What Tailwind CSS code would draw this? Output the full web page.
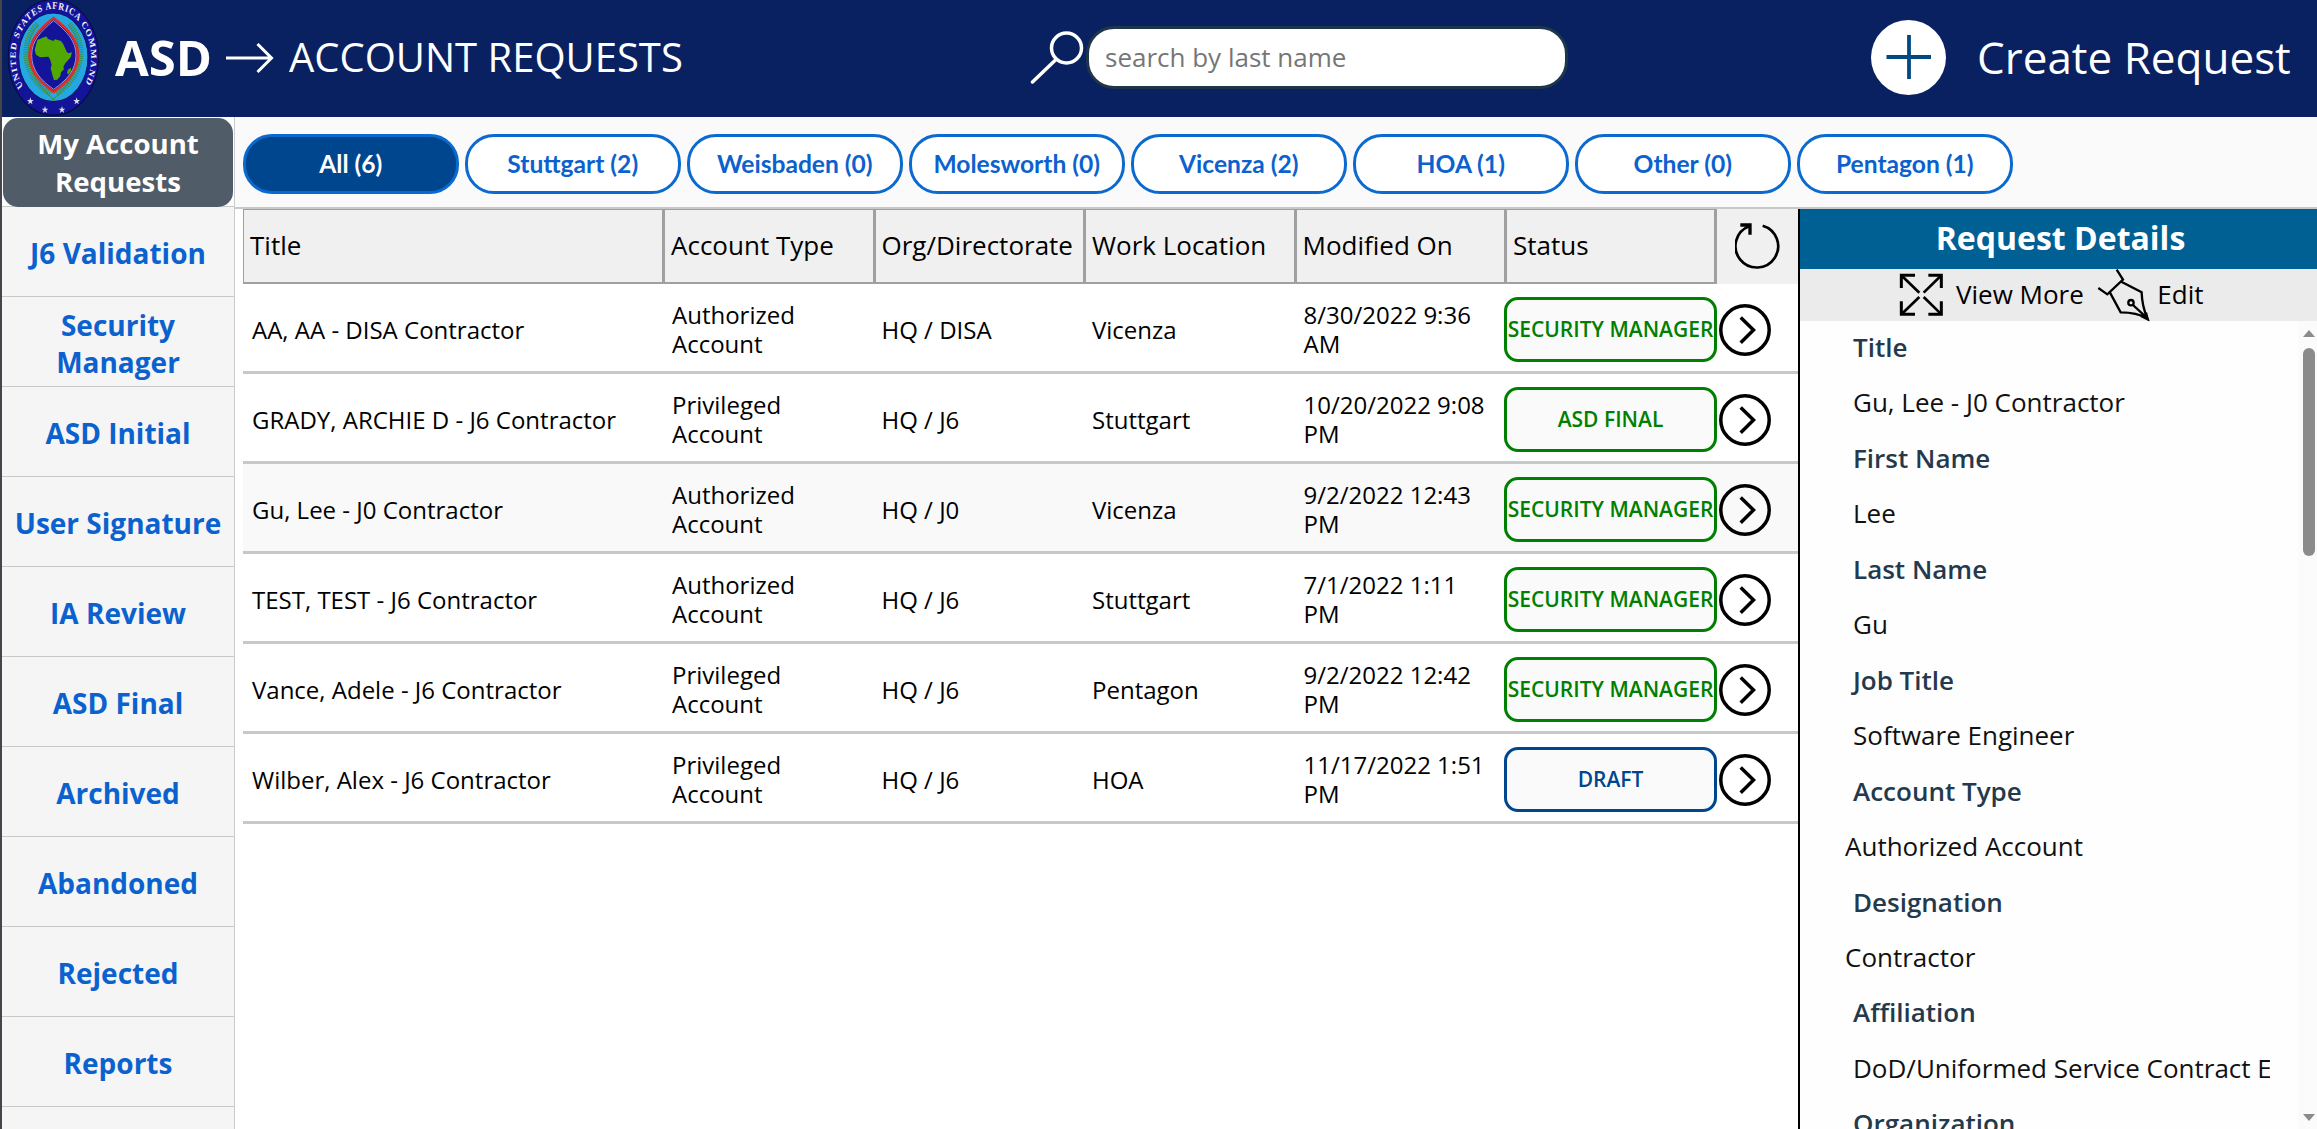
<!DOCTYPE html>
<html lang="en">
<head>
<meta charset="utf-8">
<title>ASD - Account Requests</title>
<script src="https://cdn.jsdelivr.net/npm/@tailwindcss/browser@4"></script>
</head>
<body class="flex h-[1129px] w-[2317px] flex-col overflow-hidden border-l-2 border-[#45454b] bg-white font-['Open_Sans',sans-serif] text-black">

<header class="flex h-[117px] shrink-0 items-center bg-[#092061] text-white">
  <svg class="h-[118px] w-[100px] shrink-0" viewBox="6 0 300 354">
    <g transform="translate(160 172) scale(2.73 3.5)">
      <circle r="49.6" fill="#14149a" stroke="#0a0a3c" stroke-width="1"/>
      <circle r="38" fill="#25a8e2" stroke="#0c1468" stroke-width="1"/>
      <path id="ring" d="M-33.2 24.9 A41.5 41.5 0 1 1 33.2 24.9" fill="none"/>
      <text font-family="'Liberation Serif'" font-weight="700" font-size="8.8" fill="#f4f4f8" textLength="180"><textPath href="#ring" textLength="180">UNITED STATES AFRICA COMMAND</textPath></text>
    </g>
    <g fill="none" stroke="#3f8f3c">
      <path d="M112 72C60 125 62 225 150 282M208 72C260 125 258 225 170 282" stroke-width="15" stroke-dasharray="3 3.500"/>
      <path d="M116 75C66 125 70 222 165 302M204 75C254 125 250 222 155 302" stroke-width="3"/>
    </g>
    <path d="M161 54C116 88 89 120 89 166C89 212 116 245 161 276C206 245 234 212 234 166C234 120 206 88 161 54Z" fill="#14149a" stroke="#dc2f2b" stroke-width="8"/>
    <path d="M161 62C120 95 95 124 95 166C95 208 120 240 161 268C202 240 228 208 228 166C228 124 202 95 161 62Z" fill="none" stroke="#e8d8e8" stroke-width="2"/>
    <path d="M104 150L112 120L135 110L141 110L143 116L160 123L165 118L183 123L190 133L200 155L205 160L216 157L212 172L196 190L190 200L192 208L183 217L181 228L172 239L162 240L158 228L152 205L155 195L150 178L145 170L120 172L108 164ZM213 203L213 212L206 223L201 220L203 210Z" fill="#50a800"/>
    <g fill="#dcdce8">
      <path id="star" d="M91 292l2.500 8h7.500l-6 5 2.500 8-6.500-5-6.500 5 2.500-8-6-5h7.500z"/>
      <use href="#star" x="44" y="26"/><use href="#star" x="95" y="26"/><use href="#star" x="139"/>
    </g>
  </svg>
  <div class="ml-[13px] w-[98px] pb-[4px] text-[49px] leading-[60px] font-bold">ASD</div>
  <svg class="ml-[12px] h-8 w-[50px] shrink-0" viewBox="0 0 50 32" fill="none" stroke="#fff" stroke-width="3"><path d="M1 15H46M32.500 1L46.500 15L32.500 29"/></svg>
  <div class="ml-[14px] w-[741px] pb-[4px] text-[40px] leading-[50px]">ACCOUNT REQUESTS</div>
  <svg class="mt-[-3px] h-[54px] w-[54px] shrink-0" viewBox="0 0 54 54" fill="none" stroke="#fff" stroke-width="3.500" stroke-linecap="round"><circle cx="36.500" cy="18" r="15"/><path d="M26 29.500L2.500 52"/></svg>
  <div class="ml-[2px] mt-[-2px] flex h-[63px] w-[482px] items-center rounded-[28px] border-3 border-[#1f3549] bg-white pb-[2px] pl-[16px] text-[26px] leading-8 text-[#767676]">search by last name</div>
  <svg class="mt-[-2px] ml-[303px] size-[75px] shrink-0" viewBox="0 0 75 75"><circle cx="37.500" cy="37.500" r="37.500" fill="#fff"/><path d="M15.500 37H60M38 15V59" stroke="#004a83" stroke-width="3.800"/></svg>
  <div class="ml-[31px] pb-[4px] text-[44px] leading-[60px] whitespace-nowrap">Create Request</div>
</header>

<div class="flex min-h-0 flex-1">
  <nav class="flex w-[233px] shrink-0 flex-col overflow-hidden border-r border-[#cbcbcb] bg-[#f5f5f5] text-center text-[28px] leading-[37.500px] font-bold text-[#0b62ce] *:flex *:h-[90px] *:shrink-0 *:items-center *:justify-center *:border-b *:border-[#c8c8c8] *:pt-[5px]">
    <div class="bg-[#fdfdfd] !pt-px"><div class="flex h-[89px] w-[230px] shrink-0 items-center justify-center rounded-[15px] bg-[#505d68] px-6 pt-px text-[27.600px] text-white">My Account Requests</div></div>
    <div>J6 Validation</div>
    <div class="px-10">Security Manager</div>
    <div>ASD Initial</div>
    <div>User Signature</div>
    <div>IA Review</div>
    <div>ASD Final</div>
    <div>Archived</div>
    <div>Abandoned</div>
    <div>Rejected</div>
    <div>Reports</div>
  </nav>

  <div class="flex min-w-0 flex-1 flex-col">
    <div class="flex h-[92px] shrink-0 gap-[6.500px] border-b-2 border-[#c8c8c8] bg-[#fafafa] pt-[17px] pl-[8px] font-[Lato,sans-serif] text-[24.600px] leading-7 font-bold text-[#0b62ce] *:flex *:h-[60px] *:w-[215.500px] *:items-center *:justify-center *:rounded-[29px] *:border-3 *:border-[#0a6ad0] *:pb-px">
      <div class="bg-[#00468e] text-white">All (6)</div>
      <div class="bg-white">Stuttgart (2)</div>
      <div class="bg-white">Weisbaden (0)</div>
      <div class="bg-white">Molesworth (0)</div>
      <div class="bg-white">Vicenza (2)</div>
      <div class="bg-white">HOA (1)</div>
      <div class="bg-white">Other (0)</div>
      <div class="bg-white">Pentagon (1)</div>
    </div>

    <div class="flex min-h-0 flex-1">
      <main class="w-[1563px] shrink-0 pl-[8px]">
        <div class="grid h-[75px] grid-cols-[422px_repeat(4,210.500px)_210px_81px] bg-[#f0f0f0] text-[26px] leading-8 *:flex *:items-center">
          <div class="border border-r-3 border-b-2 border-[#a0a0a0] pb-[2px] pl-[6px]">Title</div>
          <div class="border-t border-r-3 border-b-2 border-[#a0a0a0] pb-[2px] pl-[6px]">Account Type</div>
          <div class="border-t border-r-3 border-b-2 border-[#a0a0a0] pb-[2px] pl-[6px]">Org/Directorate</div>
          <div class="border-t border-r-3 border-b-2 border-[#a0a0a0] pb-[2px] pl-[6px]">Work Location</div>
          <div class="border-t border-r-3 border-b-2 border-[#a0a0a0] pb-[2px] pl-[6px]">Modified On</div>
          <div class="border-t border-r-3 border-b-2 border-[#a0a0a0] pb-[2px] pl-[6px]">Status</div>
          <div class="pl-[18px]"><svg class="h-[46.700px] w-[45px]" viewBox="165 70 135 140" fill="none" stroke="#000"><path d="M207 80A64 64 0 1 0 248 78" stroke-width="8"/><path d="M181 76H210V105" stroke-width="10"/></svg></div>
        </div>
        <div id="rows"></div>
      </main>

      <aside class="flex min-w-0 flex-1 flex-col border-l-2 border-black bg-[#fefefe]">
        <h2 class="flex h-[60px] shrink-0 items-center justify-center bg-[#006094] pb-[2px] pl-[4px] text-[32px] leading-10 font-bold text-white">Request Details</h2>
        <div class="flex h-[52px] shrink-0 items-center bg-[#ebebeb] pl-[99px] text-[26px] leading-8">
          <svg class="h-[44px] w-[45px] shrink-0" viewBox="57 39 135 132" fill="none" stroke="#000"><path d="M64 84V46H105M145 46H184V84M184 124V163H145M105 163H64V124" stroke-width="9"/><path d="M66 48L118 98M182 48L131 98M66 161L118 111M182 161L131 111" stroke-width="8"/></svg>
          <div class="ml-[12px] w-[141px] pb-[3px]">View More</div>
          <svg class="h-[54px] w-[53.300px] shrink-0" viewBox="652 24 160 162" fill="none" stroke="#000" stroke-width="7"><path d="M656 84L683 103L730 59L711 29M725 65L786 97C787 130 793 152 803 175C782 163 756 157 723 157L691 98M760 135L801 173"/><circle cx="754" cy="128" r="8"/><path d="M788 170L800 162L804 178Z" fill="#000"/></svg>
          <div class="ml-[7px] pb-[3px]">Edit</div>
        </div>
        <div class="flex min-h-0 flex-1 justify-between">
          <div class="w-[470px] overflow-hidden pl-[53px] text-[26px] leading-[55.450px] whitespace-nowrap text-[#111]">
            <div class="mt-[-1px] font-semibold text-[#24394c]">Title</div><div>Gu, Lee - J0 Contractor</div>
            <div class="font-semibold text-[#24394c]">First Name</div><div>Lee</div>
            <div class="font-semibold text-[#24394c]">Last Name</div><div>Gu</div>
            <div class="font-semibold text-[#24394c]">Job Title</div><div>Software Engineer</div>
            <div class="font-semibold text-[#24394c]">Account Type</div><div class="-ml-2">Authorized Account</div>
            <div class="font-semibold text-[#24394c]">Designation</div><div class="-ml-2">Contractor</div>
            <div class="font-semibold text-[#24394c]">Affiliation</div><div>DoD/Uniformed Service Contract E</div>
            <div class="font-semibold text-[#24394c]">Organization</div>
          </div>
          <div class="flex w-[19px] flex-col items-center justify-between bg-[#fbfbfb] pt-[9px] pb-[8px] pr-[2px] pl-[5px]">
            <div class="flex flex-col items-center">
              <svg class="h-[7px] w-3" viewBox="0 0 12 7"><path d="M6 0L12 7H0Z" fill="#8b8b8b"/></svg>
              <div class="mt-[11px] h-[208px] w-3 rounded-full bg-[#8b8b8b]"></div>
            </div>
            <svg class="h-[7px] w-3" viewBox="0 0 12 7"><path d="M0 0H12L6 7Z" fill="#8b8b8b"/></svg>
          </div>
        </div>
      </aside>
    </div>
  </div>
</div>

<script>
const requests = [
  ['AA, AA - DISA Contractor', 'Authorized Account', 'HQ / DISA', 'Vicenza', '8/30/2022 9:36 AM', 'SECURITY MANAGER'],
  ['GRADY, ARCHIE D - J6 Contractor', 'Privileged Account', 'HQ / J6', 'Stuttgart', '10/20/2022 9:08 PM', 'ASD FINAL'],
  ['Gu, Lee - J0 Contractor', 'Authorized Account', 'HQ / J0', 'Vicenza', '9/2/2022 12:43 PM', 'SECURITY MANAGER', true],
  ['TEST, TEST - J6 Contractor', 'Authorized Account', 'HQ / J6', 'Stuttgart', '7/1/2022 1:11 PM', 'SECURITY MANAGER'],
  ['Vance, Adele - J6 Contractor', 'Privileged Account', 'HQ / J6', 'Pentagon', '9/2/2022 12:42 PM', 'SECURITY MANAGER'],
  ['Wilber, Alex - J6 Contractor', 'Privileged Account', 'HQ / J6', 'HOA', '11/17/2022 1:51 PM', 'DRAFT'],
];
document.getElementById('rows').innerHTML = requests.map(([title, type, org, location, modified, status, selected]) => `
  <div class="grid h-[90px] grid-cols-[422px_repeat(4,210.500px)_210px_81px] items-center border-b-3 border-[#c8c8c8] pt-[3px] text-[24px] leading-[29px] ${selected ? 'bg-[#f9f9f9]' : 'bg-white'}">
    <div class="pl-[9px]">${title}</div>
    <div class="pr-16 pl-[7px]">${type}</div>
    <div class="pl-[6px]">${org}</div>
    <div class="pl-[6px]">${location}</div>
    <div class="pr-4 pl-[7px]">${modified}</div>
    <div class="-ml-[3px] mt-px flex h-[65px] w-[213px] items-center justify-center rounded-[14px] border-3 bg-[#fafafa] pb-px text-[21px] font-semibold whitespace-nowrap ${status === 'DRAFT' ? 'border-[#00468e] text-[#00468e]' : 'border-[#008000] text-[#008000]'}">${status}</div>
    <svg class="mt-px ml-[2px] size-[52px]" viewBox="0 0 52 52" fill="none" stroke="#000" stroke-width="3.500"><circle cx="26" cy="26" r="24.200"/><path d="M21.700 13.500L34.500 26L21.700 38.800"/></svg>
  </div>`).join('');
</script>
</body>
</html>
